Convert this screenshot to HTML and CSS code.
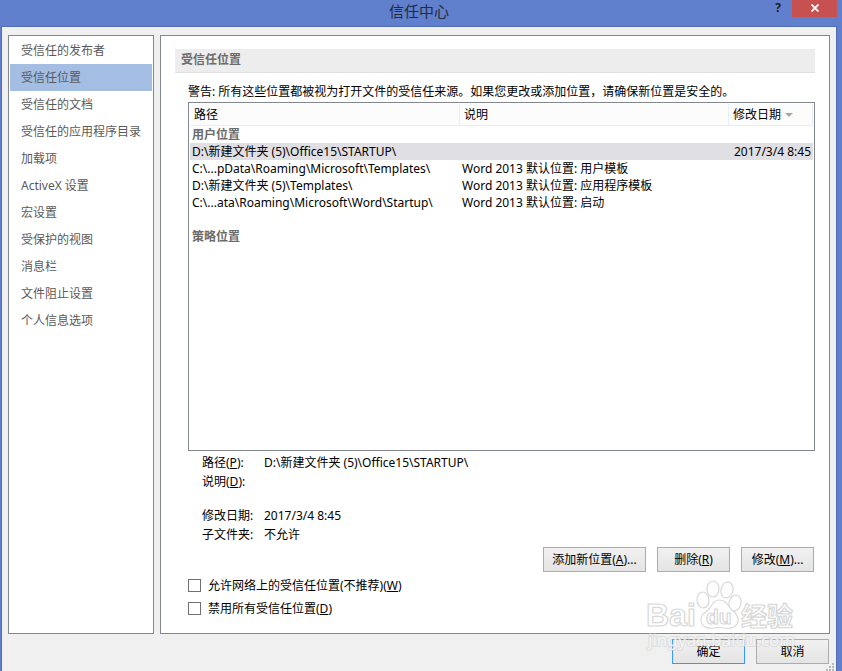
FILE: index.html
```html
<!DOCTYPE html>
<html lang="zh-CN">
<head>
<meta charset="utf-8">
<title>信任中心</title>
<link rel="stylesheet" href="styles.css">
</head>
<body>
<div class="window">
  <header class="titlebar">
    <h1 class="title">信任中心</h1>
    <div class="caption-buttons">
      <button class="help" type="button" aria-label="帮助">?</button>
      <button class="close" type="button" aria-label="关闭">
        <svg width="8" height="8" viewBox="0 0 8 8"><path d="M0.5 0.5 7.5 7.5M7.5 0.5 0.5 7.5" stroke="#fff" stroke-width="1.8"/></svg>
      </button>
    </div>
  </header>
  <div class="client">
    <div class="panels">
      <nav class="panel sidebar">
        <a href="#">受信任的发布者</a>
        <a href="#" class="selected" aria-current="page">受信任位置</a>
        <a href="#">受信任的文档</a>
        <a href="#">受信任的应用程序目录</a>
        <a href="#">加载项</a>
        <a href="#">ActiveX 设置</a>
        <a href="#">宏设置</a>
        <a href="#">受保护的视图</a>
        <a href="#">消息栏</a>
        <a href="#">文件阻止设置</a>
        <a href="#">个人信息选项</a>
      </nav>
      <main class="panel content">
        <h2 class="section-title">受信任位置</h2>
        <div class="section">
          <p class="warning">警告: 所有这些位置都被视为打开文件的受信任来源。如果您更改或添加位置，请确保新位置是安全的。</p>
          <div class="list">
            <table>
              <colgroup><col class="col-path"><col><col class="col-date"></colgroup>
              <thead>
                <tr><th>路径</th><th>说明</th><th>修改日期<span class="sort"></span></th></tr>
              </thead>
              <tbody>
                <tr class="group"><td colspan="3">用户位置</td></tr>
                <tr class="selected"><td>D:\新建文件夹 (5)\Office15\STARTUP\</td><td></td><td class="date">2017/3/4 8:45</td></tr>
                <tr><td>C:\...pData\Roaming\Microsoft\Templates\</td><td>Word 2013 默认位置: 用户模板</td><td></td></tr>
                <tr><td>D:\新建文件夹 (5)\Templates\</td><td>Word 2013 默认位置: 应用程序模板</td><td></td></tr>
                <tr><td>C:\...ata\Roaming\Microsoft\Word\Startup\</td><td>Word 2013 默认位置: 启动</td><td></td></tr>
                <tr><td colspan="3"></td></tr>
                <tr class="group"><td colspan="3">策略位置</td></tr>
              </tbody>
            </table>
          </div>
          <dl class="details">
            <dt>路径(<u>P</u>):</dt><dd>D:\新建文件夹 (5)\Office15\STARTUP\</dd>
            <dt>说明(<u>D</u>):</dt><dd></dd>
          </dl>
          <dl class="details">
            <dt>修改日期:</dt><dd>2017/3/4 8:45</dd>
            <dt>子文件夹:</dt><dd>不允许</dd>
          </dl>
          <div class="actions">
            <button type="button" class="btn wide">添加新位置(<u>A</u>)...</button>
            <button type="button" class="btn">删除(<u>R</u>)</button>
            <button type="button" class="btn">修改(<u>M</u>)...</button>
          </div>
          <div class="options">
            <label><input type="checkbox"><span>允许网络上的受信任位置(不推荐)(<u>W</u>)</span></label>
            <label><input type="checkbox"><span>禁用所有受信任位置(<u>D</u>)</span></label>
          </div>
        </div>
      </main>
    </div>
    <footer class="footer">
      <button type="button" class="btn default">确定</button>
      <button type="button" class="btn">取消</button>
    </footer>
    <svg class="grip" width="8" height="8" viewBox="0 0 8 8" fill="#b9b9b9"><path d="M6 0h2v2H6zM3 3h2v2H3zM6 3h2v2H6zM0 6h2v2H0zM3 6h2v2H3zM6 6h2v2H6z"/></svg>
  </div>
  <svg class="watermark" width="160" height="76" viewBox="0 0 160 76">
    <text class="mark-url" x="2" y="66">jingyan.baidu.com</text>
    <g fill="#fff" fill-opacity="0.75" stroke="#d8d8d8" stroke-width="1.2">
      <ellipse cx="67" cy="9" rx="6" ry="8"/>
      <ellipse cx="81" cy="10" rx="6" ry="8" transform="rotate(12 81 10)"/>
      <ellipse cx="57" cy="20" rx="6" ry="8" transform="rotate(-6 57 20)"/>
      <ellipse cx="89" cy="23" rx="6" ry="8" transform="rotate(14 89 23)"/>
      <path d="M73 20c7 0 9 6 13 10 5 4 7 7 6 12-2 6-8 7-14 6q-5-1-10 0c-6 1-12-1-13-7-1-5 3-8 7-11 4-4 5-10 11-10z"/>
      <text class="mark-latin" x="0" y="46">Bai</text>
      <text class="mark-du" x="60" y="44">du</text>
      <text class="mark-cjk" x="95" y="46">经验</text>
    </g>
  </svg>
</div>
</body>
</html>
```
FILE: styles.css
```css
* { box-sizing: border-box; }

body {
  margin: 0;
  font: 12px/17px "Noto Sans", "Noto Sans CJK SC", sans-serif;
  color: #000;
}

h1, h2, p, dl, dd { margin: 0; }

button, input { font: inherit; color: inherit; }

.window {
  position: relative;
  display: flex;
  flex-direction: column;
  min-height: 100vh;
  padding: 0 5px 0 1px;
  background: #607fcd;
}

.titlebar {
  display: grid;
  grid-template-columns: 1fr auto 1fr;
  height: 26px;
}

.title {
  grid-column: 2;
  font-size: 15px;
  font-weight: 400;
  line-height: 22px;
  color: #262b38;
}

.caption-buttons {
  display: flex;
  justify-content: flex-end;
  align-items: flex-start;
  gap: 7px;
}

.help {
  padding: 0;
  width: 14px;
  border: 0;
  background: none;
  font-size: 12px;
  font-weight: 700;
  line-height: 16px;
  color: #202020;
}

.close {
  display: flex;
  justify-content: center;
  align-items: center;
  width: 45px;
  height: 17px;
  padding: 0 0 2px;
  border: 0;
  background: #c75050;
}

.client {
  position: relative;
  flex: 1;
  display: flex;
  flex-direction: column;
  padding: 8px 6px 0;
  border: solid #506eb4;
  border-width: 1px 1px 0;
  background: #f0f0f0;
}

.panels {
  flex: 1;
  display: grid;
  grid-template-columns: 146px 1fr;
  gap: 6px;
}

.panel {
  border: 1px solid #828790;
  background: #fff;
}

.sidebar { padding: 1px; }

.sidebar a {
  display: block;
  padding-left: 11px;
  line-height: 27px;
  color: #5a5a5a;
  text-decoration: none;
}

.sidebar .selected { background: #a3bde3; }

.content {
  display: flex;
  flex-direction: column;
  padding: 13px 14px 13px;
}

.section-title {
  height: 24px;
  padding-left: 6px;
  border-bottom: 1px solid #e0e0e0;
  background: #ededed;
  font-size: 12px;
  font-weight: 700;
  line-height: 22px;
  color: #6b6b6b;
}

.section {
  flex: 1;
  display: flex;
  flex-direction: column;
  padding: 9px 0 0 13px;
}

.warning { line-height: 20px; }

.list {
  flex: 1;
  margin-bottom: 2px;
  padding: 1px;
  border: 1px solid #828790;
}

table {
  width: 100%;
  table-layout: fixed;
  border-collapse: separate;
  border-spacing: 0;
}

.col-path { width: 270px; }
.col-date { width: 84px; }

th {
  height: 22px;
  padding: 0 4px;
  border: solid #e5eefa;
  border-width: 0 1px 1px 0;
  background: #fcfcfc;
  font-weight: 400;
  text-align: left;
  white-space: nowrap;
}

td {
  height: 17px;
  padding: 0 2px;
  line-height: 17px;
  white-space: nowrap;
}

tbody .selected { background: #e0dfe4; }

.group { font-weight: 700; color: #6b6b6b; }

.date { text-align: right; }

.sort {
  display: inline-block;
  margin-left: 4px;
  border: solid transparent;
  border-width: 4px 4px 0;
  border-top-color: #aca899;
  vertical-align: 2px;
}

.details {
  display: grid;
  grid-template-columns: 62px 1fr;
  grid-auto-rows: 19px;
  margin-bottom: 15px;
  padding-left: 14px;
  line-height: 19px;
}

.details + .details { margin-bottom: 3px; }

.actions {
  display: flex;
  justify-content: flex-end;
  gap: 11px;
  margin-bottom: 2px;
  padding-right: 1px;
}

.btn {
  width: 73px;
  height: 25px;
  padding: 0;
  border: 1px solid #acacac;
  background: linear-gradient(#f1f1f1, #e4e4e4);
  white-space: nowrap;
}

.wide { width: 103px; }

.default { border-color: #3399ff; }

.options label {
  display: flex;
  align-items: center;
  gap: 7px;
  width: max-content;
  height: 23px;
}

.options input {
  appearance: none;
  width: 13px;
  height: 13px;
  margin: 0;
  border: 1px solid #707070;
  background: #fff;
}

.footer {
  display: flex;
  justify-content: flex-end;
  gap: 11px;
  padding: 5px 1px 7px;
}

.grip {
  position: absolute;
  right: 2px;
  bottom: 0;
}

.watermark {
  position: absolute;
  right: 36px;
  bottom: 15px;
  pointer-events: none;
}

.mark-latin { font: 700 32px "Liberation Sans", sans-serif; }
.mark-du { font: 700 21px "Liberation Sans", sans-serif; }
.mark-cjk { font: 700 26px "Noto Sans CJK SC", sans-serif; }

.mark-url {
  font: 17px "Noto Sans", sans-serif;
  fill: #fff;
  fill-opacity: 0.7;
  stroke: #ccc;
  stroke-opacity: 0.5;
  stroke-width: 2px;
  paint-order: stroke;
}
```
